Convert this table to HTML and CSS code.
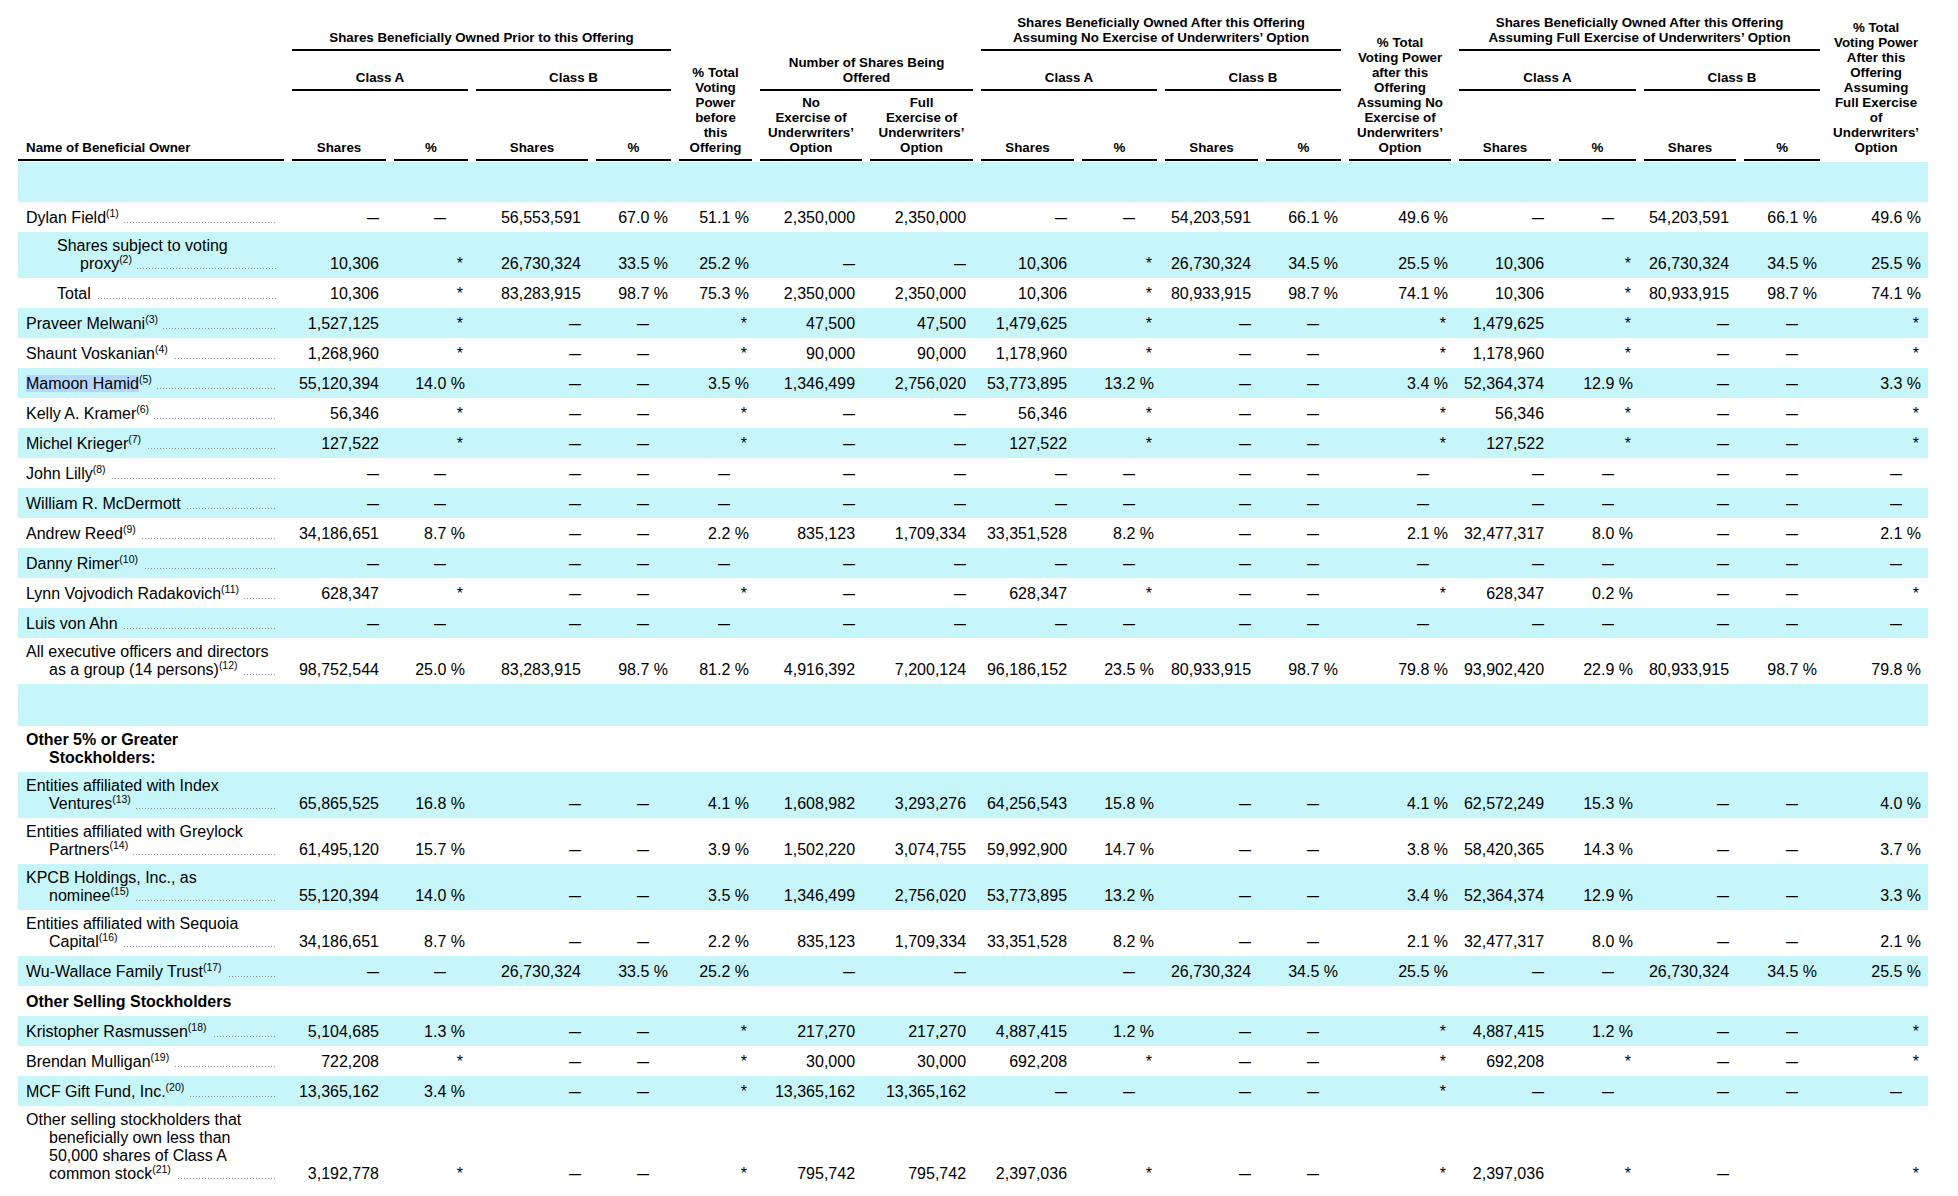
FILE: index.html
```html
<!DOCTYPE html>
<html lang="en">
<head>
<meta charset="utf-8">
<title>Beneficial Ownership</title>
<link rel="stylesheet" href="styles.css">
</head>
<body>
<table class="t">
<colgroup>
<col class="k0"><col class="k1"><col class="k2"><col class="k3"><col class="k4"><col class="k5"><col class="k6"><col class="k7"><col class="k8"><col class="k9"><col class="k10"><col class="k11"><col class="k12"><col class="k13"><col class="k14"><col class="k15"><col class="k16"><col class="k17">
</colgroup>
<thead>
<tr class="r1">
<th rowspan="3" class="nmh"><div>Name of Beneficial Owner</div></th>
<th colspan="4"><div>Shares Beneficially Owned Prior to this Offering</div></th>
<th rowspan="3"><div>% Total<br>Voting<br>Power<br>before<br>this<br>Offering</div></th>
<th colspan="2" rowspan="2"><div>Number of Shares Being<br>Offered</div></th>
<th colspan="4"><div>Shares Beneficially Owned After this Offering<br>Assuming No Exercise of Underwriters’ Option</div></th>
<th rowspan="3"><div>% Total<br>Voting Power<br>after this<br>Offering<br>Assuming No<br>Exercise of<br>Underwriters’<br>Option</div></th>
<th colspan="4"><div>Shares Beneficially Owned After this Offering<br>Assuming Full Exercise of Underwriters’ Option</div></th>
<th rowspan="3" class="nol"><div>% Total<br>Voting Power<br>After this<br>Offering<br>Assuming<br>Full Exercise<br>of<br>Underwriters’<br>Option</div></th>
</tr>
<tr class="r2">
<th colspan="2"><div>Class A</div></th><th colspan="2"><div>Class B</div></th>
<th colspan="2"><div>Class A</div></th><th colspan="2"><div>Class B</div></th>
<th colspan="2"><div>Class A</div></th><th colspan="2"><div>Class B</div></th>
</tr>
<tr class="r3">
<th><div>Shares</div></th><th><div>%</div></th><th><div>Shares</div></th><th><div>%</div></th>
<th><div>No<br>Exercise of<br>Underwriters’<br>Option</div></th><th><div>Full<br>Exercise of<br>Underwriters’<br>Option</div></th>
<th><div>Shares</div></th><th><div>%</div></th><th><div>Shares</div></th><th><div>%</div></th>
<th><div>Shares</div></th><th><div>%</div></th><th><div>Shares</div></th><th><div>%</div></th>
</tr>
</thead>
<tbody>
<tr class="c bk"><td colspan="18"></td></tr>

<tr><td class="nm"><div class="l"><span class="tx">Dylan Field<sup>(1)</sup></span></div></td><td><span class="d">–</span></td><td><span class="d">–</span></td><td>56,553,591</td><td>67.0 %</td><td>51.1 %</td><td>2,350,000</td><td>2,350,000</td><td><span class="d">–</span></td><td><span class="d">–</span></td><td>54,203,591</td><td>66.1 %</td><td>49.6 %</td><td><span class="d">–</span></td><td><span class="d">–</span></td><td>54,203,591</td><td>66.1 %</td><td>49.6 %</td></tr>

<tr class="c"><td class="nm"><div class="l in"><span class="tx">Shares subject to voting<br>proxy<sup>(2)</sup></span></div></td><td>10,306</td><td><span class="a">*</span></td><td>26,730,324</td><td>33.5 %</td><td>25.2 %</td><td><span class="d">–</span></td><td><span class="d">–</span></td><td>10,306</td><td><span class="a">*</span></td><td>26,730,324</td><td>34.5 %</td><td>25.5 %</td><td>10,306</td><td><span class="a">*</span></td><td>26,730,324</td><td>34.5 %</td><td>25.5 %</td></tr>

<tr><td class="nm"><div class="l in"><span class="tx">Total</span></div></td><td>10,306</td><td><span class="a">*</span></td><td>83,283,915</td><td>98.7 %</td><td>75.3 %</td><td>2,350,000</td><td>2,350,000</td><td>10,306</td><td><span class="a">*</span></td><td>80,933,915</td><td>98.7 %</td><td>74.1 %</td><td>10,306</td><td><span class="a">*</span></td><td>80,933,915</td><td>98.7 %</td><td>74.1 %</td></tr>

<tr class="c"><td class="nm"><div class="l"><span class="tx">Praveer Melwani<sup>(3)</sup></span></div></td><td>1,527,125</td><td><span class="a">*</span></td><td><span class="d">–</span></td><td><span class="d">–</span></td><td><span class="a">*</span></td><td>47,500</td><td>47,500</td><td>1,479,625</td><td><span class="a">*</span></td><td><span class="d">–</span></td><td><span class="d">–</span></td><td><span class="a">*</span></td><td>1,479,625</td><td><span class="a">*</span></td><td><span class="d">–</span></td><td><span class="d">–</span></td><td><span class="a">*</span></td></tr>

<tr><td class="nm"><div class="l"><span class="tx">Shaunt Voskanian<sup>(4)</sup></span></div></td><td>1,268,960</td><td><span class="a">*</span></td><td><span class="d">–</span></td><td><span class="d">–</span></td><td><span class="a">*</span></td><td>90,000</td><td>90,000</td><td>1,178,960</td><td><span class="a">*</span></td><td><span class="d">–</span></td><td><span class="d">–</span></td><td><span class="a">*</span></td><td>1,178,960</td><td><span class="a">*</span></td><td><span class="d">–</span></td><td><span class="d">–</span></td><td><span class="a">*</span></td></tr>

<tr class="c"><td class="nm"><div class="l"><span class="tx"><mark>Mamoon Hamid</mark><sup>(5)</sup></span></div></td><td>55,120,394</td><td>14.0 %</td><td><span class="d">–</span></td><td><span class="d">–</span></td><td>3.5 %</td><td>1,346,499</td><td>2,756,020</td><td>53,773,895</td><td>13.2 %</td><td><span class="d">–</span></td><td><span class="d">–</span></td><td>3.4 %</td><td>52,364,374</td><td>12.9 %</td><td><span class="d">–</span></td><td><span class="d">–</span></td><td>3.3 %</td></tr>

<tr><td class="nm"><div class="l"><span class="tx">Kelly A. Kramer<sup>(6)</sup></span></div></td><td>56,346</td><td><span class="a">*</span></td><td><span class="d">–</span></td><td><span class="d">–</span></td><td><span class="a">*</span></td><td><span class="d">–</span></td><td><span class="d">–</span></td><td>56,346</td><td><span class="a">*</span></td><td><span class="d">–</span></td><td><span class="d">–</span></td><td><span class="a">*</span></td><td>56,346</td><td><span class="a">*</span></td><td><span class="d">–</span></td><td><span class="d">–</span></td><td><span class="a">*</span></td></tr>

<tr class="c"><td class="nm"><div class="l"><span class="tx">Michel Krieger<sup>(7)</sup></span></div></td><td>127,522</td><td><span class="a">*</span></td><td><span class="d">–</span></td><td><span class="d">–</span></td><td><span class="a">*</span></td><td><span class="d">–</span></td><td><span class="d">–</span></td><td>127,522</td><td><span class="a">*</span></td><td><span class="d">–</span></td><td><span class="d">–</span></td><td><span class="a">*</span></td><td>127,522</td><td><span class="a">*</span></td><td><span class="d">–</span></td><td><span class="d">–</span></td><td><span class="a">*</span></td></tr>

<tr><td class="nm"><div class="l"><span class="tx">John Lilly<sup>(8)</sup></span></div></td><td><span class="d">–</span></td><td><span class="d">–</span></td><td><span class="d">–</span></td><td><span class="d">–</span></td><td><span class="d">–</span></td><td><span class="d">–</span></td><td><span class="d">–</span></td><td><span class="d">–</span></td><td><span class="d">–</span></td><td><span class="d">–</span></td><td><span class="d">–</span></td><td><span class="d">–</span></td><td><span class="d">–</span></td><td><span class="d">–</span></td><td><span class="d">–</span></td><td><span class="d">–</span></td><td><span class="d">–</span></td></tr>

<tr class="c"><td class="nm"><div class="l"><span class="tx">William R. McDermott</span></div></td><td><span class="d">–</span></td><td><span class="d">–</span></td><td><span class="d">–</span></td><td><span class="d">–</span></td><td><span class="d">–</span></td><td><span class="d">–</span></td><td><span class="d">–</span></td><td><span class="d">–</span></td><td><span class="d">–</span></td><td><span class="d">–</span></td><td><span class="d">–</span></td><td><span class="d">–</span></td><td><span class="d">–</span></td><td><span class="d">–</span></td><td><span class="d">–</span></td><td><span class="d">–</span></td><td><span class="d">–</span></td></tr>

<tr><td class="nm"><div class="l"><span class="tx">Andrew Reed<sup>(9)</sup></span></div></td><td>34,186,651</td><td>8.7 %</td><td><span class="d">–</span></td><td><span class="d">–</span></td><td>2.2 %</td><td>835,123</td><td>1,709,334</td><td>33,351,528</td><td>8.2 %</td><td><span class="d">–</span></td><td><span class="d">–</span></td><td>2.1 %</td><td>32,477,317</td><td>8.0 %</td><td><span class="d">–</span></td><td><span class="d">–</span></td><td>2.1 %</td></tr>

<tr class="c"><td class="nm"><div class="l"><span class="tx">Danny Rimer<sup>(10)</sup></span></div></td><td><span class="d">–</span></td><td><span class="d">–</span></td><td><span class="d">–</span></td><td><span class="d">–</span></td><td><span class="d">–</span></td><td><span class="d">–</span></td><td><span class="d">–</span></td><td><span class="d">–</span></td><td><span class="d">–</span></td><td><span class="d">–</span></td><td><span class="d">–</span></td><td><span class="d">–</span></td><td><span class="d">–</span></td><td><span class="d">–</span></td><td><span class="d">–</span></td><td><span class="d">–</span></td><td><span class="d">–</span></td></tr>

<tr><td class="nm"><div class="l"><span class="tx">Lynn Vojvodich Radakovich<sup>(11)</sup></span></div></td><td>628,347</td><td><span class="a">*</span></td><td><span class="d">–</span></td><td><span class="d">–</span></td><td><span class="a">*</span></td><td><span class="d">–</span></td><td><span class="d">–</span></td><td>628,347</td><td><span class="a">*</span></td><td><span class="d">–</span></td><td><span class="d">–</span></td><td><span class="a">*</span></td><td>628,347</td><td>0.2 %</td><td><span class="d">–</span></td><td><span class="d">–</span></td><td><span class="a">*</span></td></tr>

<tr class="c"><td class="nm"><div class="l"><span class="tx">Luis von Ahn</span></div></td><td><span class="d">–</span></td><td><span class="d">–</span></td><td><span class="d">–</span></td><td><span class="d">–</span></td><td><span class="d">–</span></td><td><span class="d">–</span></td><td><span class="d">–</span></td><td><span class="d">–</span></td><td><span class="d">–</span></td><td><span class="d">–</span></td><td><span class="d">–</span></td><td><span class="d">–</span></td><td><span class="d">–</span></td><td><span class="d">–</span></td><td><span class="d">–</span></td><td><span class="d">–</span></td><td><span class="d">–</span></td></tr>

<tr><td class="nm"><div class="l"><span class="tx">All executive officers and directors<br>as a group (14 persons)<sup>(12)</sup></span></div></td><td>98,752,544</td><td>25.0 %</td><td>83,283,915</td><td>98.7 %</td><td>81.2 %</td><td>4,916,392</td><td>7,200,124</td><td>96,186,152</td><td>23.5 %</td><td>80,933,915</td><td>98.7 %</td><td>79.8 %</td><td>93,902,420</td><td>22.9 %</td><td>80,933,915</td><td>98.7 %</td><td>79.8 %</td></tr>

<tr class="c bk2"><td colspan="18"></td></tr>

<tr><td class="nm"><div class="h">Other 5% or Greater<br>Stockholders:</div></td><td></td><td></td><td></td><td></td><td></td><td></td><td></td><td></td><td></td><td></td><td></td><td></td><td></td><td></td><td></td><td></td><td></td></tr>

<tr class="c"><td class="nm"><div class="l"><span class="tx">Entities affiliated with Index<br>Ventures<sup>(13)</sup></span></div></td><td>65,865,525</td><td>16.8 %</td><td><span class="d">–</span></td><td><span class="d">–</span></td><td>4.1 %</td><td>1,608,982</td><td>3,293,276</td><td>64,256,543</td><td>15.8 %</td><td><span class="d">–</span></td><td><span class="d">–</span></td><td>4.1 %</td><td>62,572,249</td><td>15.3 %</td><td><span class="d">–</span></td><td><span class="d">–</span></td><td>4.0 %</td></tr>

<tr><td class="nm"><div class="l"><span class="tx">Entities affiliated with Greylock<br>Partners<sup>(14)</sup></span></div></td><td>61,495,120</td><td>15.7 %</td><td><span class="d">–</span></td><td><span class="d">–</span></td><td>3.9 %</td><td>1,502,220</td><td>3,074,755</td><td>59,992,900</td><td>14.7 %</td><td><span class="d">–</span></td><td><span class="d">–</span></td><td>3.8 %</td><td>58,420,365</td><td>14.3 %</td><td><span class="d">–</span></td><td><span class="d">–</span></td><td>3.7 %</td></tr>

<tr class="c"><td class="nm"><div class="l"><span class="tx">KPCB Holdings, Inc., as<br>nominee<sup>(15)</sup></span></div></td><td>55,120,394</td><td>14.0 %</td><td><span class="d">–</span></td><td><span class="d">–</span></td><td>3.5 %</td><td>1,346,499</td><td>2,756,020</td><td>53,773,895</td><td>13.2 %</td><td><span class="d">–</span></td><td><span class="d">–</span></td><td>3.4 %</td><td>52,364,374</td><td>12.9 %</td><td><span class="d">–</span></td><td><span class="d">–</span></td><td>3.3 %</td></tr>

<tr><td class="nm"><div class="l"><span class="tx">Entities affiliated with Sequoia<br>Capital<sup>(16)</sup></span></div></td><td>34,186,651</td><td>8.7 %</td><td><span class="d">–</span></td><td><span class="d">–</span></td><td>2.2 %</td><td>835,123</td><td>1,709,334</td><td>33,351,528</td><td>8.2 %</td><td><span class="d">–</span></td><td><span class="d">–</span></td><td>2.1 %</td><td>32,477,317</td><td>8.0 %</td><td><span class="d">–</span></td><td><span class="d">–</span></td><td>2.1 %</td></tr>

<tr class="c"><td class="nm"><div class="l"><span class="tx">Wu-Wallace Family Trust<sup>(17)</sup></span></div></td><td><span class="d">–</span></td><td><span class="d">–</span></td><td>26,730,324</td><td>33.5 %</td><td>25.2 %</td><td><span class="d">–</span></td><td><span class="d">–</span></td><td></td><td><span class="d">–</span></td><td>26,730,324</td><td>34.5 %</td><td>25.5 %</td><td><span class="d">–</span></td><td><span class="d">–</span></td><td>26,730,324</td><td>34.5 %</td><td>25.5 %</td></tr>

<tr><td class="nm"><div class="h">Other Selling Stockholders</div></td><td></td><td></td><td></td><td></td><td></td><td></td><td></td><td></td><td></td><td></td><td></td><td></td><td></td><td></td><td></td><td></td><td></td></tr>

<tr class="c"><td class="nm"><div class="l"><span class="tx">Kristopher Rasmussen<sup>(18)</sup></span></div></td><td>5,104,685</td><td>1.3 %</td><td><span class="d">–</span></td><td><span class="d">–</span></td><td><span class="a">*</span></td><td>217,270</td><td>217,270</td><td>4,887,415</td><td>1.2 %</td><td><span class="d">–</span></td><td><span class="d">–</span></td><td><span class="a">*</span></td><td>4,887,415</td><td>1.2 %</td><td><span class="d">–</span></td><td><span class="d">–</span></td><td><span class="a">*</span></td></tr>

<tr><td class="nm"><div class="l"><span class="tx">Brendan Mulligan<sup>(19)</sup></span></div></td><td>722,208</td><td><span class="a">*</span></td><td><span class="d">–</span></td><td><span class="d">–</span></td><td><span class="a">*</span></td><td>30,000</td><td>30,000</td><td>692,208</td><td><span class="a">*</span></td><td><span class="d">–</span></td><td><span class="d">–</span></td><td><span class="a">*</span></td><td>692,208</td><td><span class="a">*</span></td><td><span class="d">–</span></td><td><span class="d">–</span></td><td><span class="a">*</span></td></tr>

<tr class="c"><td class="nm"><div class="l"><span class="tx">MCF Gift Fund, Inc.<sup>(20)</sup></span></div></td><td>13,365,162</td><td>3.4 %</td><td><span class="d">–</span></td><td><span class="d">–</span></td><td><span class="a">*</span></td><td>13,365,162</td><td>13,365,162</td><td><span class="d">–</span></td><td><span class="d">–</span></td><td><span class="d">–</span></td><td><span class="d">–</span></td><td><span class="a">*</span></td><td><span class="d">–</span></td><td><span class="d">–</span></td><td><span class="d">–</span></td><td><span class="d">–</span></td><td><span class="d">–</span></td></tr>

<tr><td class="nm"><div class="l"><span class="tx">Other selling stockholders that<br>beneficially own less than<br>50,000 shares of Class A<br>common stock<sup>(21)</sup></span></div></td><td>3,192,778</td><td><span class="a">*</span></td><td><span class="d">–</span></td><td><span class="d">–</span></td><td><span class="a">*</span></td><td>795,742</td><td>795,742</td><td>2,397,036</td><td><span class="a">*</span></td><td><span class="d">–</span></td><td><span class="d">–</span></td><td><span class="a">*</span></td><td>2,397,036</td><td><span class="a">*</span></td><td><span class="d">–</span></td><td></td><td><span class="a">*</span></td></tr>
</tbody>
</table>
</body>
</html>
```
FILE: styles.css
```css
html, body {
  margin: 0;
  background: #fff;
}
body {
  font-family: "Liberation Sans", Arial, Helvetica, sans-serif;
  color: #000;
}
.t {
  border-collapse: collapse;
  table-layout: fixed;
  width: 1910px;
  margin: 12px 0 0 18px;
}
.k0 { width: 270px; }
.k1 { width: 102px; }
.k2 { width: 82px; }
.k3 { width: 120px; }
.k4 { width: 83px; }
.k5 { width: 81px; }
.k6 { width: 110px; }
.k7 { width: 111px; }
.k8 { width: 101px; }
.k9 { width: 83px; }
.k10 { width: 101px; }
.k11 { width: 83px; }
.k12 { width: 110px; }
.k13 { width: 100px; }
.k14 { width: 85px; }
.k15 { width: 100px; }
.k16 { width: 84px; }
.k17 { width: 104px; }

/* header */
.t th {
  font-size: 13.33px;
  line-height: 15px;
  font-weight: bold;
  padding: 0 4px 1px;
  vertical-align: bottom;
  text-align: center;
  white-space: nowrap;
}
.t th > div {
  border-bottom: 2px solid #000;
  padding-bottom: 4px;
}
.t th.nmh { padding-left: 0; text-align: left; }
.t th.nmh > div { padding-left: 8px; }
.t th.nol > div { border-bottom-color: transparent; }
.r1 { height: 40px; }
.r2 { height: 40px; }
.r3 { height: 70px; }

/* body */
.t tbody tr { height: 30px; }
.t td {
  font-size: 16px;
  line-height: 18px;
  padding: 5px 11px 5px 4px;
  text-align: right;
  vertical-align: bottom;
  white-space: nowrap;
}
.t tbody td:nth-child(3),
.t tbody td:nth-child(5),
.t tbody td:nth-child(6),
.t tbody td:nth-child(10),
.t tbody td:nth-child(12),
.t tbody td:nth-child(13),
.t tbody td:nth-child(15),
.t tbody td:nth-child(17),
.t tbody td:nth-child(18) {
  padding-right: 7px;
}
.t tbody td:nth-child(3) .d,
.t tbody td:nth-child(5) .d,
.t tbody td:nth-child(6) .d,
.t tbody td:nth-child(10) .d,
.t tbody td:nth-child(12) .d,
.t tbody td:nth-child(13) .d,
.t tbody td:nth-child(15) .d,
.t tbody td:nth-child(17) .d,
.t tbody td:nth-child(18) .d {
  margin-right: 19px;
}
.c td { background: #c6f6fa; }
.t tbody tr.bk { height: 40px; }
.t tbody tr.bk2 { height: 42px; }
.bk td, .bk2 td { padding: 0; }

.d {
  display: inline-block;
  transform: scaleX(1.35);
  transform-origin: right center;
}
.a { margin-right: 2px; }

.t td.nm {
  text-align: left;
  padding: 5px 11px 5px 8px;
}
.l {
  padding-left: 23px;
  text-indent: -23px;
  white-space: nowrap;
  background-image: linear-gradient(90deg, #8f8f8f 1px, transparent 1px);
  background-size: 3px 1px;
  background-repeat: repeat-x;
  background-position: 0 calc(100% - 4px);
  background-clip: content-box;
  background-origin: content-box;
}
.l.in { margin-left: 31px; }
.tx {
  background: #fff;
  padding-right: 5px;
}
.c .tx { background: #c6f6fa; }
.h {
  font-weight: bold;
  padding-left: 23px;
  text-indent: -23px;
  white-space: nowrap;
}
sup {
  font-size: 10.5px;
  line-height: 0;
  vertical-align: 6px;
}
mark {
  background: #b4d7ff;
  color: #000;
}
```
